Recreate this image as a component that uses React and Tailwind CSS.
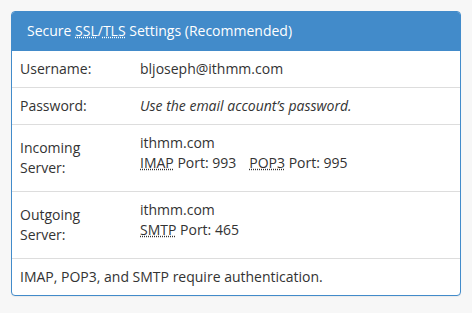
import React from "react";

const rows = [
  {
    label: "Username:",
    value: <span>bljoseph@ithmm.com</span>,
  },
  {
    label: "Password:",
    value: <em>Use the email account’s password.</em>,
  },
  {
    label: (
      <>
        Incoming
        <br />
        Server:
      </>
    ),
    tall: true,
    value: (
      <>
        <div>ithmm.com</div>
        <div>
          <abbr title="Internet Message Access Protocol">IMAP</abbr> Port: 993
          <span className="ml-[13px]">
            <abbr title="Post Office Protocol 3">POP3</abbr> Port: 995
          </span>
        </div>
      </>
    ),
  },
  {
    label: (
      <>
        Outgoing
        <br />
        Server:
      </>
    ),
    tall: true,
    value: (
      <>
        <div>ithmm.com</div>
        <div>
          <abbr title="Simple Mail Transfer Protocol">SMTP</abbr> Port: 465
        </div>
      </>
    ),
  },
];

export default function App() {
  return (
    <div className="min-h-[313px] bg-[#f7f7f7] px-[11px] pt-[11px] font-['Open_Sans',sans-serif] text-[14px] leading-5 text-[#333]">
      <div className="overflow-hidden rounded-[4px] border border-[#428bca] bg-white shadow-[0_1px_1px_rgba(0,0,0,0.05)]">
        {/* Heading */}
        <div className="bg-[#428bca] px-[15px] pt-[9px] pb-[10px] text-[14px] leading-5 text-white">
          Secure <abbr title="Secure Sockets Layer">SSL</abbr>/
          <abbr title="Transport Layer Security">TLS</abbr> Settings
          (Recommended)
        </div>

        {rows.map((row, index) => (
          <div
            key={index}
            className={`grid grid-cols-[120px_1fr] ${
              index > 0 ? "border-t border-[#ddd]" : ""
            }`}
          >
            <div className="self-center px-2 py-2">{row.label}</div>
            <div
              className={`px-2 pt-2 ${row.tall ? "pb-[18px]" : "pb-2"}`}
            >
              {row.value}
            </div>
          </div>
        ))}

        <div className="border-t border-[#ddd] px-2 py-2">
          IMAP, POP3, and SMTP require authentication.
        </div>
      </div>
    </div>
  );
}
